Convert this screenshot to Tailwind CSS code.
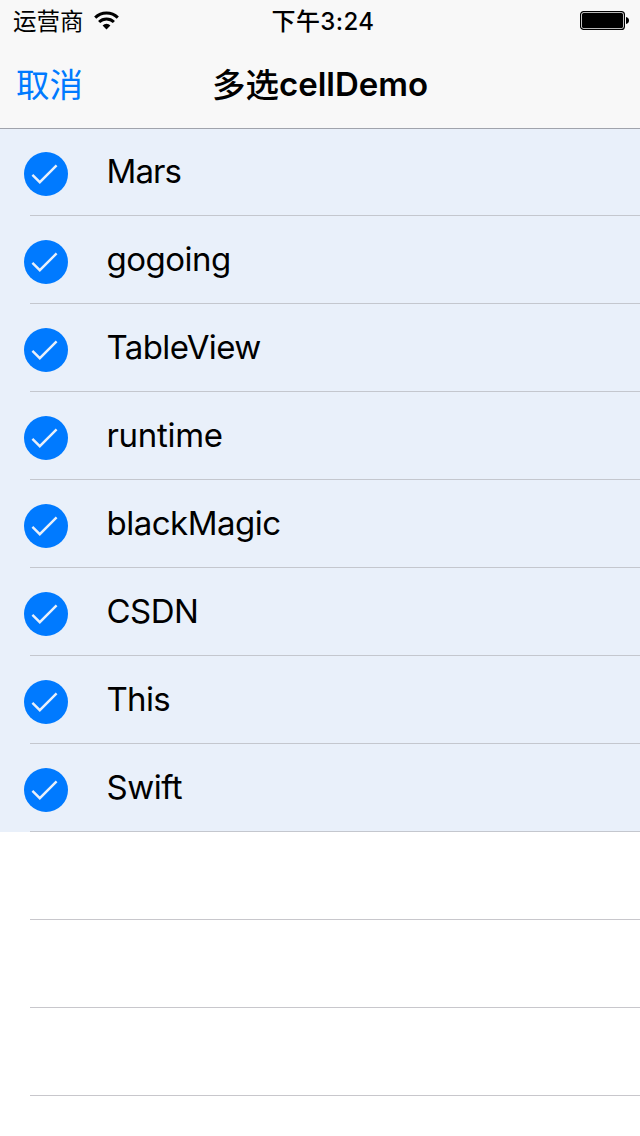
<!DOCTYPE html>
<html lang="zh-CN">
<head>
<meta charset="utf-8">
<title>多选cellDemo</title>
<script src="https://cdn.jsdelivr.net/npm/@tailwindcss/browser@4"></script>
</head>
<body class="flex h-[1136px] w-[640px] flex-col overflow-hidden bg-white font-['Inter','Noto_Sans_CJK_SC',sans-serif] text-black">
<svg class="hidden">
  <symbol id="check" viewBox="0 0 44 44">
    <circle cx="22" cy="22" r="22" fill="#007aff"/>
    <path d="M8.4 22.8 15.8 30.2 32.6 13.4" fill="none" stroke="#e9f0fa" stroke-width="2.4"/>
  </symbol>
</svg>
<header class="h-32 shrink-0 bg-[#f8f8f8]">
  <div class="grid h-10 grid-cols-[1fr_auto_1fr] items-center pl-[13px] pr-[11px]">
    <div class="flex items-center gap-2.5">
      <span class="pt-0.5 text-[23.5px] leading-10">运营商</span>
      <svg class="-mt-0.5 h-[19px] w-[25px]" viewBox="0 0 25 19" fill="none" stroke="#000" stroke-width="3">
        <path d="M1.2 6.6a16 16 0 0 1 22.6 0"/>
        <path d="M5.1 11a10.6 10.6 0 0 1 14.8 0"/>
        <path d="M12.5 18.4 8.6 14.4a5.6 5.6 0 0 1 7.8 0z" fill="#000" stroke="none"/>
      </svg>
    </div>
    <div class="pl-1 pt-0.5 text-center text-[24px] font-medium leading-10 tracking-[0.4px]">下午3:24</div>
    <svg class="h-5 w-[49px] justify-self-end" viewBox="0 0 49 20">
      <rect x=".6" y=".6" width="43.8" height="17.8" rx="3" fill="none" stroke="#000" stroke-width="1.2"/>
      <rect x="2" y="2" width="41" height="15" rx="1.5"/>
      <path d="M46 6c2 .4 3 1.6 3 3.5s-1 3.1-3 3.5z"/>
    </svg>
  </div>
  <nav class="grid h-[88px] grid-cols-[1fr_auto_1fr] items-center px-4">
    <a class="pt-0.5 text-[33.5px] leading-[44px] text-[#007aff]">取消</a>
    <h1 class="flex items-center text-[33px] font-semibold leading-[44px]"><span class="pt-0.5 text-[33.5px] font-medium">多选</span><span>cellDemo</span></h1>
  </nav>
</header>
<main class="flex flex-col">
  <ul class="bg-[#e9f0fa] shadow-[inset_0_1px_0_#a0a3ac]">
    <li class="flex h-22 pl-6"><svg class="mt-6 size-11"><use href="#check"/></svg><span class="-ml-[38px] flex flex-1 items-center border-b border-[#c4c7ce] pl-[76.5px] text-[33px]"><span class="tracking-[-0.9px]">Mars</span></span></li>
    <li class="flex h-22 pl-6"><svg class="mt-6 size-11"><use href="#check"/></svg><span class="-ml-[38px] flex flex-1 items-center border-b border-[#c4c7ce] pl-[76.5px] text-[33px]"><span class="tracking-[-0.5px]">gogoing</span></span></li>
    <li class="flex h-22 pl-6"><svg class="mt-6 size-11"><use href="#check"/></svg><span class="-ml-[38px] flex flex-1 items-center border-b border-[#c4c7ce] pl-[76.5px] text-[33px]"><span class="tracking-[-0.6px]">TableView</span></span></li>
    <li class="flex h-22 pl-6"><svg class="mt-6 size-11"><use href="#check"/></svg><span class="-ml-[38px] flex flex-1 items-center border-b border-[#c4c7ce] pl-[76.5px] text-[33px]"><span class="tracking-[-0.3px]">runtime</span></span></li>
    <li class="flex h-22 pl-6"><svg class="mt-6 size-11"><use href="#check"/></svg><span class="-ml-[38px] flex flex-1 items-center border-b border-[#c4c7ce] pl-[76.5px] text-[33px]"><span class="tracking-[-0.5px]">blackMagic</span></span></li>
    <li class="flex h-22 pl-6"><svg class="mt-6 size-11"><use href="#check"/></svg><span class="-ml-[38px] flex flex-1 items-center border-b border-[#c4c7ce] pl-[76.5px] text-[33px]"><span class="tracking-[-0.5px]">CSDN</span></span></li>
    <li class="flex h-22 pl-6"><svg class="mt-6 size-11"><use href="#check"/></svg><span class="-ml-[38px] flex flex-1 items-center border-b border-[#c4c7ce] pl-[76.5px] text-[33px]"><span class="tracking-[-0.7px]">This</span></span></li>
    <li class="flex h-22 pl-6"><svg class="mt-6 size-11"><use href="#check"/></svg><span class="-ml-[38px] flex flex-1 items-center border-b border-[#c4c7ce] pl-[76.5px] text-[33px]"><span class="tracking-[-0.5px]">Swift</span></span></li>
  </ul>
  <div class="ml-[30px] h-22 border-b border-[#c8c7cc]"></div>
  <div class="ml-[30px] h-22 border-b border-[#c8c7cc]"></div>
  <div class="ml-[30px] h-22 border-b border-[#c8c7cc]"></div>
</main>
</body>
</html>
